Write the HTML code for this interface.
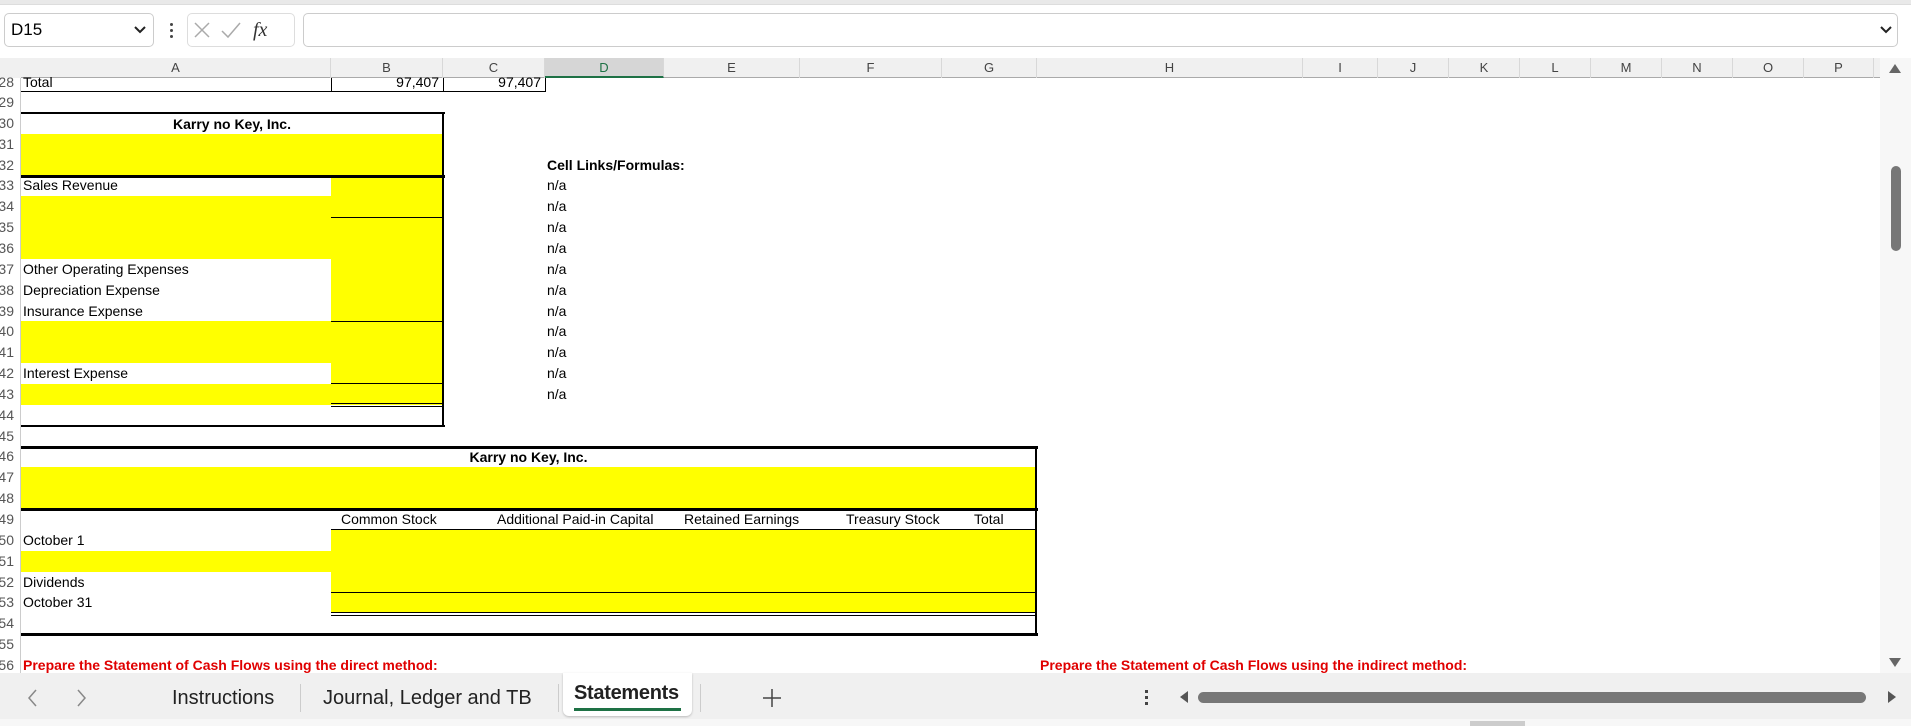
<!DOCTYPE html>
<html><head><meta charset="utf-8"><style>
*{margin:0;padding:0;box-sizing:border-box}
body{width:1911px;height:726px;overflow:hidden;background:#fff;font-family:"Liberation Sans",sans-serif;position:relative;color:#000}
.a{position:absolute}
.t{position:absolute;font-size:14px;line-height:21px;white-space:nowrap}
.b{font-weight:bold}
.y{position:absolute;background:#ffff00}
.hl{position:absolute;background:#000;height:1px}
.hl3{position:absolute;background:#000;height:3px}
.vl{position:absolute;background:#000;width:1px}
.rn{position:absolute;left:-12px;width:26px;text-align:right;font-size:14px;line-height:21px;color:#555}
.ch{position:absolute;top:58px;height:20px;font-size:13px;line-height:20px;text-align:center;color:#444;border-right:1px solid #d8d8d8}
.red{color:#e00000;font-weight:bold}
</style></head><body>
<!-- top -->
<div class="a" style="left:0;top:0;width:1911px;height:5px;background:#e9e9e9;border-bottom:1px solid #ddd"></div>
<div class="a" style="left:4px;top:13px;width:150px;height:34px;border:1px solid #ccc;border-radius:5px"></div>
<div class="t" style="left:11px;top:19px;font-size:17px">D15</div>
<svg class="a" style="left:134px;top:26px" width="12" height="9"><path d="M1 1 L6 6 L11 1" stroke="#222" stroke-width="2" fill="none"/></svg>
<div class="a" style="left:170px;top:23px;width:3px;height:3px;background:#444;border-radius:2px"></div>
<div class="a" style="left:170px;top:29px;width:3px;height:3px;background:#444;border-radius:2px"></div>
<div class="a" style="left:170px;top:35px;width:3px;height:3px;background:#444;border-radius:2px"></div>
<div class="a" style="left:187px;top:13px;width:108px;height:34px;border:1px solid #ddd;border-radius:5px"></div>
<svg class="a" style="left:193px;top:20px" width="90" height="22"><path d="M2 3 L16 17 M16 3 L2 17" stroke="#aaa" stroke-width="1.5"/><path d="M29 11 L35 17 L47 3" stroke="#aaa" stroke-width="1.5" fill="none"/><text x="60" y="16" font-family="Liberation Serif" font-style="italic" font-size="20" fill="#333">fx</text></svg>
<div class="a" style="left:303px;top:13px;width:1595px;height:34px;border:1px solid #ccc;border-radius:5px"></div>
<svg class="a" style="left:1880px;top:26px" width="12" height="9"><path d="M1 1 L6 6 L11 1" stroke="#222" stroke-width="2" fill="none"/></svg>
<!-- column headers -->
<div class="a" style="left:0;top:58px;width:1880px;height:20px;background:#f0f0f0;border-bottom:1px solid #aaa"></div>
<div class="ch" style="left:21px;width:310px">A</div>
<div class="ch" style="left:331px;width:112px">B</div>
<div class="ch" style="left:443px;width:102px">C</div>
<div class="ch" style="left:545px;width:119px;background:#d6d6d6;border-bottom:2px solid #1e7145;color:#1e7145">D</div>
<div class="ch" style="left:664px;width:136px">E</div>
<div class="ch" style="left:800px;width:142px">F</div>
<div class="ch" style="left:942px;width:95px">G</div>
<div class="ch" style="left:1037px;width:266px">H</div>
<div class="ch" style="left:1303px;width:75px">I</div>
<div class="ch" style="left:1378px;width:71px">J</div>
<div class="ch" style="left:1449px;width:71px">K</div>
<div class="ch" style="left:1520px;width:71px">L</div>
<div class="ch" style="left:1591px;width:71px">M</div>
<div class="ch" style="left:1662px;width:71px">N</div>
<div class="ch" style="left:1733px;width:71px">O</div>
<div class="ch" style="left:1804px;width:70px">P</div>
<div class="a" style="left:0;top:58px;width:21px;height:20px;background:#f0f0f0"></div>
<div class="a" style="left:20px;top:78px;width:1px;height:595px;background:#ccc"></div>
<!-- row numbers -->
<div class="rn" style="top:72px">28</div>
<div class="rn" style="top:92px">29</div><div class="rn" style="top:112.85px">30</div><div class="rn" style="top:133.7px">31</div><div class="rn" style="top:154.55px">32</div><div class="rn" style="top:175.4px">33</div><div class="rn" style="top:196.25px">34</div><div class="rn" style="top:217.1px">35</div><div class="rn" style="top:237.95px">36</div><div class="rn" style="top:258.8px">37</div><div class="rn" style="top:279.65px">38</div><div class="rn" style="top:300.5px">39</div><div class="rn" style="top:321.35px">40</div><div class="rn" style="top:342.2px">41</div><div class="rn" style="top:363.05px">42</div><div class="rn" style="top:383.9px">43</div><div class="rn" style="top:404.75px">44</div><div class="rn" style="top:425.6px">45</div><div class="rn" style="top:446.45px">46</div><div class="rn" style="top:467.3px">47</div><div class="rn" style="top:488.15px">48</div><div class="rn" style="top:509px">49</div><div class="rn" style="top:529.85px">50</div><div class="rn" style="top:550.7px">51</div><div class="rn" style="top:571.55px">52</div><div class="rn" style="top:592.4px">53</div><div class="rn" style="top:613.25px">54</div><div class="rn" style="top:634.1px">55</div><div class="rn" style="top:654.95px">56</div>
<!-- row 28 -->
<div class="t" style="left:23px;top:72px">Total</div>
<div class="t" style="left:331px;width:108px;text-align:right;top:72px">97,407</div>
<div class="t" style="left:443px;width:98px;text-align:right;top:72px">97,407</div>
<div class="hl" style="left:21px;top:91px;width:525px"></div>
<div class="vl" style="left:331px;top:78px;height:14px"></div>
<div class="vl" style="left:443px;top:78px;height:14px"></div>
<div class="vl" style="left:545px;top:78px;height:14px"></div>
<!-- table 1 -->
<div class="y" style="left:21px;top:133.7px;width:422px;height:41.7px"></div>
<div class="y" style="left:331px;top:175.4px;width:112px;height:229.35px"></div>
<div class="y" style="left:21px;top:196.25px;width:310px;height:62.55px"></div>
<div class="y" style="left:21px;top:321.35px;width:310px;height:41.7px"></div>
<div class="y" style="left:21px;top:383.9px;width:310px;height:20.85px"></div>
<div class="hl3" style="left:21px;top:112px;width:424px;height:2px"></div>
<div class="hl3" style="left:21px;top:174.5px;width:424px"></div>
<div class="hl3" style="left:21px;top:424.5px;width:424px;height:2px"></div>
<div class="vl" style="left:442px;top:112px;height:314px;width:2px"></div>
<div class="hl" style="left:331px;top:217px;width:112px"></div>
<div class="hl" style="left:331px;top:321px;width:112px"></div>
<div class="hl" style="left:331px;top:383px;width:112px"></div>
<div class="hl" style="left:331px;top:403px;width:112px"></div>
<div class="hl" style="left:331px;top:406px;width:112px"></div>
<div class="t b" style="left:21px;width:422px;text-align:center;top:114px">Karry no Key, Inc.</div>
<div class="t" style="left:23px;top:175.4px">Sales Revenue</div>
<div class="t" style="left:23px;top:258.8px">Other Operating Expenses</div>
<div class="t" style="left:23px;top:279.65px">Depreciation Expense</div>
<div class="t" style="left:23px;top:300.5px">Insurance Expense</div>
<div class="t" style="left:23px;top:363.05px">Interest Expense</div>
<div class="t b" style="left:547px;top:154.55px">Cell Links/Formulas:</div>
<div class="t" style="left:547px;top:175.4px">n/a</div><div class="t" style="left:547px;top:196.25px">n/a</div><div class="t" style="left:547px;top:217.1px">n/a</div><div class="t" style="left:547px;top:237.95px">n/a</div><div class="t" style="left:547px;top:258.8px">n/a</div><div class="t" style="left:547px;top:279.65px">n/a</div><div class="t" style="left:547px;top:300.5px">n/a</div><div class="t" style="left:547px;top:321.35px">n/a</div><div class="t" style="left:547px;top:342.2px">n/a</div><div class="t" style="left:547px;top:363.05px">n/a</div><div class="t" style="left:547px;top:383.9px">n/a</div>
<!-- table 2 -->
<div class="y" style="left:21px;top:467.3px;width:1015px;height:41.7px"></div>
<div class="y" style="left:331px;top:529.85px;width:705px;height:83.4px"></div>
<div class="y" style="left:21px;top:550.7px;width:310px;height:20.85px"></div>
<div class="hl3" style="left:21px;top:445.5px;width:1017px"></div>
<div class="hl3" style="left:21px;top:507.5px;width:1017px"></div>
<div class="hl3" style="left:21px;top:633px;width:1017px"></div>
<div class="vl" style="left:1035px;top:445.5px;height:190px;width:2px"></div>
<div class="hl" style="left:331px;top:529px;width:705px"></div>
<div class="hl" style="left:331px;top:592px;width:705px"></div>
<div class="hl" style="left:331px;top:612px;width:705px"></div>
<div class="hl" style="left:331px;top:615px;width:705px"></div>
<div class="t b" style="left:21px;width:1015px;text-align:center;top:447px">Karry no Key, Inc.</div>
<div class="t" style="left:341px;top:509px">Common Stock</div>
<div class="t" style="left:497px;top:509px">Additional Paid-in Capital</div>
<div class="t" style="left:684px;top:509px">Retained Earnings</div>
<div class="t" style="left:846px;top:509px">Treasury Stock</div>
<div class="t" style="left:974px;top:509px">Total</div>
<div class="t" style="left:23px;top:529.85px">October 1</div>
<div class="t" style="left:23px;top:571.55px">Dividends</div>
<div class="t" style="left:23px;top:592.4px">October 31</div>
<div class="t red" style="left:23px;top:654.95px">Prepare the Statement of Cash Flows using the direct method:</div>
<div class="t red" style="left:1040px;top:654.95px">Prepare the Statement of Cash Flows using the indirect method:</div>
<!-- vertical scrollbar -->
<div class="a" style="left:1880px;top:58px;width:31px;height:615px;background:#f7f7f7"></div>
<svg class="a" style="left:1887px;top:62px" width="16" height="12"><path d="M2 11 L8 2 L14 11 Z" fill="#666"/></svg>
<div class="a" style="left:1891px;top:166px;width:10px;height:85px;background:#777;border-radius:5px"></div>
<svg class="a" style="left:1887px;top:657px" width="16" height="12"><path d="M2 1 L8 10 L14 1 Z" fill="#666"/></svg>
<!-- tab bar -->
<div class="a" style="left:0;top:673px;width:1911px;height:53px;background:#f0f0f0"></div>
<div class="a" style="left:0;top:719px;width:1911px;height:7px;background:#f7f7f7"></div>
<div class="a" style="left:1470px;top:721px;width:55px;height:5px;background:#ccc"></div>
<svg class="a" style="left:25px;top:687px" width="70" height="22"><path d="M11 3 L4 11 L11 19" stroke="#888" stroke-width="1.5" fill="none"/><path d="M53 3 L60 11 L53 19" stroke="#888" stroke-width="1.5" fill="none"/></svg>
<div class="t" style="left:172px;top:686px;font-size:20px;line-height:24px;color:#222">Instructions</div>
<div class="a" style="left:300px;top:684px;width:1px;height:28px;background:#ccc"></div>
<div class="t" style="left:323px;top:686px;font-size:20px;line-height:24px;color:#222">Journal, Ledger and TB</div>
<div class="a" style="left:558px;top:684px;width:1px;height:28px;background:#ccc"></div>
<div class="a" style="left:563px;top:673px;width:129px;height:43px;background:#fff;border-radius:0 0 6px 6px;box-shadow:0 1px 2px #bbb"></div>
<div class="t" style="left:574px;top:681px;font-size:20px;line-height:24px;color:#222;font-weight:bold;letter-spacing:-0.3px">Statements</div>
<div class="a" style="left:574px;top:708px;width:107px;height:3px;background:#1e7145"></div>
<div class="a" style="left:700px;top:684px;width:1px;height:28px;background:#ccc"></div>
<svg class="a" style="left:762px;top:688px" width="20" height="20"><path d="M10 1 V19 M1 10 H19" stroke="#444" stroke-width="1.5"/></svg>
<div class="a" style="left:1145px;top:690px;width:3px;height:3px;background:#444"></div>
<div class="a" style="left:1145px;top:696px;width:3px;height:3px;background:#444"></div>
<div class="a" style="left:1145px;top:702px;width:3px;height:3px;background:#444"></div>
<svg class="a" style="left:1178px;top:690px" width="12" height="14"><path d="M10 1 L2 7 L10 13 Z" fill="#555"/></svg>
<div class="a" style="left:1198px;top:692px;width:668px;height:11px;background:#777;border-radius:6px"></div>
<svg class="a" style="left:1886px;top:690px" width="12" height="14"><path d="M2 1 L10 7 L2 13 Z" fill="#555"/></svg>
</body></html>
